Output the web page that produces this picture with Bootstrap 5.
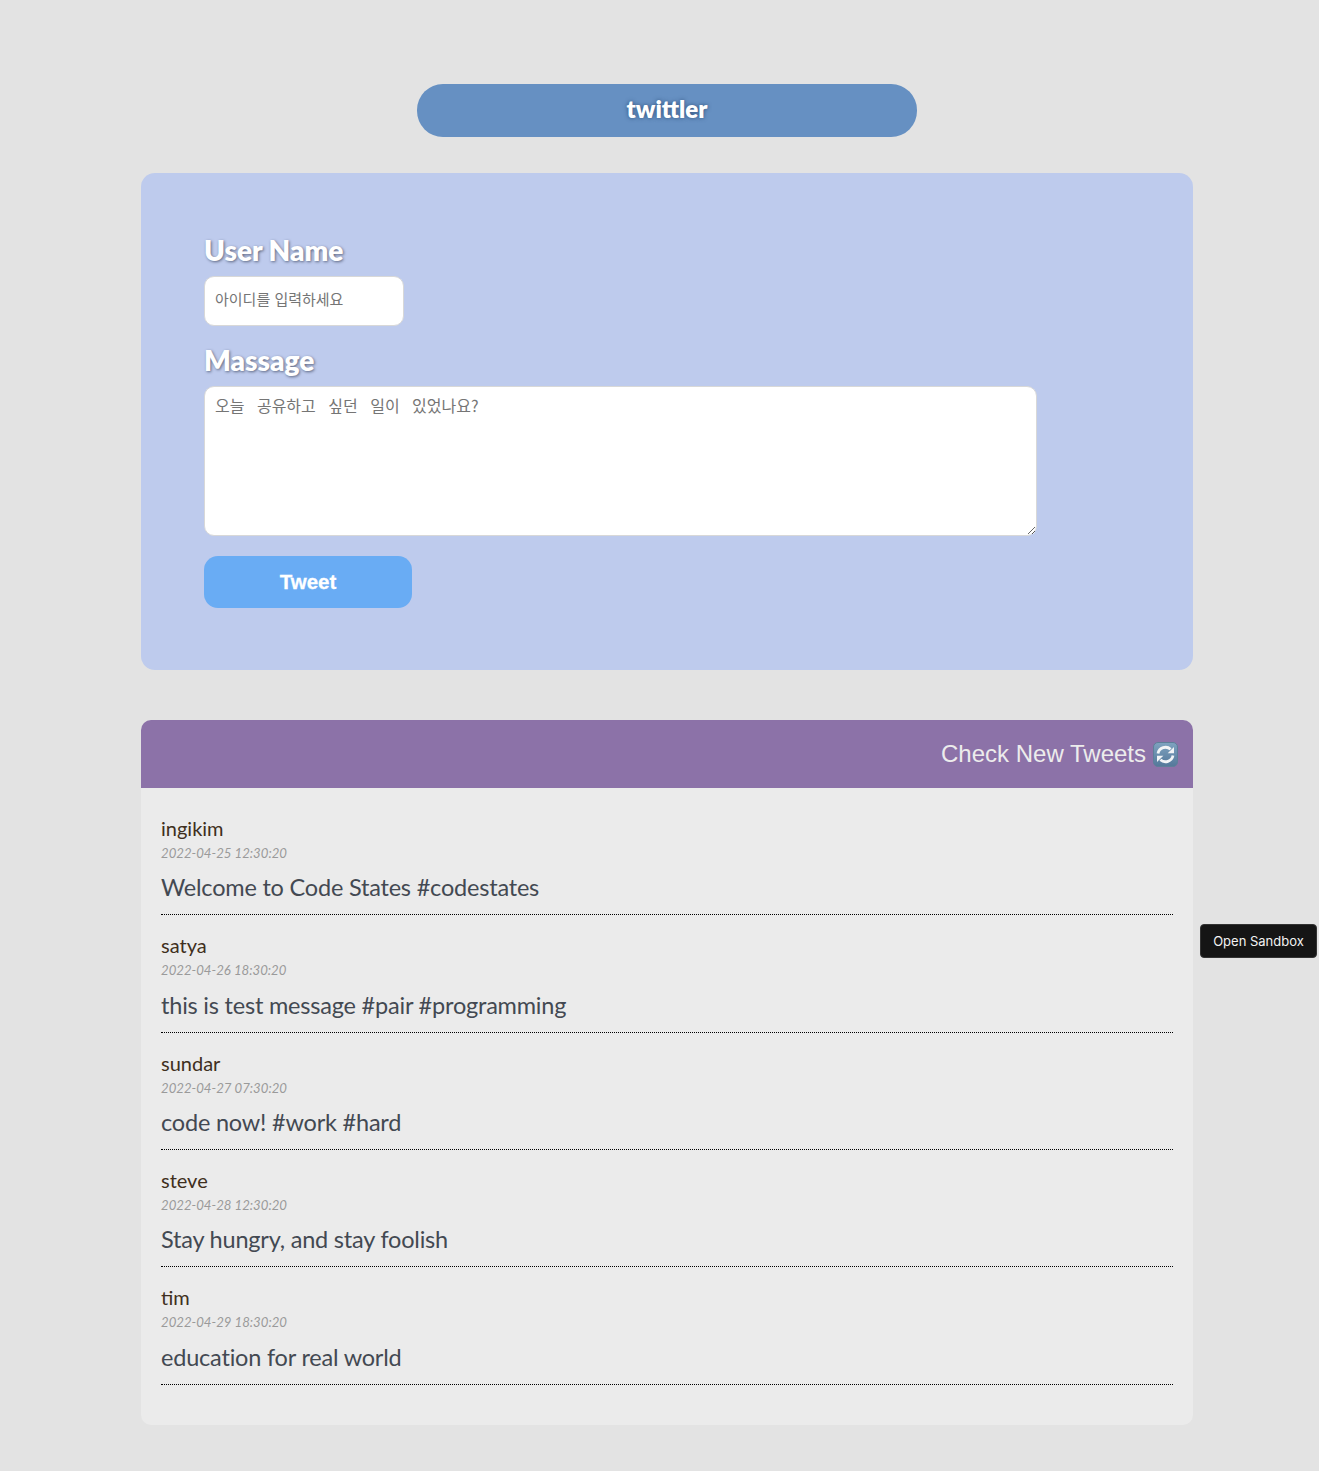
<!DOCTYPE html>
<html lang="ko">
<head>
<meta charset="utf-8">
<title>twittler</title>
<link rel="stylesheet" href="https://cdn.jsdelivr.net/npm/bootstrap@5.3.0/dist/css/bootstrap.min.css">
<style>
html,body{height:100%}
body{background:#e3e3e3;font-family:Lato,"Noto Sans CJK KR",sans-serif;margin:0}
.page-wrap{padding:84px 0 46px 15px}
.page-inner{width:1052px}
.title-bar{width:500px;height:53px;background:#6690c2;border-radius:26px;color:#fff;font-weight:800;font-size:24px;line-height:50px;text-align:center;text-shadow:0 0 4px #2f4f7a}
.form-panel{margin-top:36px;height:497px;background:#becbed;border-radius:14px;padding:59px 63px 0}
.field-title{display:block;color:#fff;font-weight:800;font-size:28px;line-height:36px;height:44px;margin:0;text-shadow:1px 1px 3px #5c6680}
.form-panel .name-box,.form-panel .msg-box{display:block;border:1px solid #d8d8d8;border-radius:10px;background:#fff;padding:8px 10px;font-family:"Noto Sans CJK KR","Noto Sans",sans-serif;line-height:20px;color:#333;box-shadow:none}
.name-box::placeholder,.msg-box::placeholder{color:#757575;opacity:1}
.form-panel .name-box{width:200px;height:50px;margin-bottom:16px;font-size:15px;padding-bottom:13px}
.form-panel .msg-box{width:833px;height:150px;font-size:16px;word-spacing:8px;resize:vertical;min-height:0}
.tweet-btn{display:block;width:208px;height:52px;margin-top:20px;border:0;border-radius:14px;background:#69acf4;color:#fff;font-family:"Liberation Sans",sans-serif;font-weight:700;font-size:20.5px;padding:0;-webkit-text-stroke:.3px #fff}
.tweet-btn:hover{background:#69acf4;color:#fff}
.feed-panel{margin-top:50px;background:#ebebeb;border-radius:10px;height:705px;overflow:hidden}
.feed-head{height:68px;background:#8c72a8;color:#ececec;font-family:"Liberation Sans",sans-serif;font-size:24px;line-height:68px;padding-right:15px}
.refresh-icon{width:25px;height:25px;margin-left:7px;vertical-align:-5px}
.feed-list{padding:9.8px 20px 0}
.feed-item{height:117.4px;padding-top:19px;border-bottom:1px dotted #000}
.who{color:#3f2f20;font-size:20px;line-height:22px}
.when{color:#9a9a9a;font-size:13.2px;font-style:italic;line-height:22px;margin-top:3px}
.what{color:#434952;font-size:23.5px;line-height:30px;margin-top:8.4px;letter-spacing:-.2px}
.sandbox-tag{position:fixed;left:1200px;top:924px;width:117px;height:34px;background:#151515;border:1px solid #333;border-radius:4px;color:#f2f2f2;font-family:Inter,sans-serif;font-size:13px;line-height:32px;text-align:center}
</style>
</head>
<body>
<div class="page-wrap">
  <div class="page-inner mx-auto">
    <div class="title-bar mx-auto">twittler</div>
    <form class="form-panel">
      <label class="field-title" for="u">User Name</label>
      <input id="u" class="name-box form-control" type="text" placeholder="아이디를 입력하세요">
      <label class="field-title" for="m">Massage</label>
      <textarea id="m" class="msg-box form-control" placeholder="오늘 공유하고 싶던 일이 있었나요?"></textarea>
      <button type="button" class="tweet-btn btn">Tweet</button>
    </form>
    <section class="feed-panel">
      <div class="feed-head text-end">Check New Tweets<svg class="refresh-icon" viewBox="0 0 25 25" aria-hidden="true"><defs><linearGradient id="g" x1="0" y1="0" x2="0" y2="1"><stop offset="0" stop-color="#7fa3c0"/><stop offset="1" stop-color="#54789a"/></linearGradient></defs><rect x=".5" y=".5" width="24" height="24" rx="4.5" fill="url(#g)" stroke="#5f7f99"/><path d="M5 11.5a7.6 7.6 0 0 1 12.6-4.2" fill="none" stroke="#f2f4f6" stroke-width="2.8"/><path d="M21 5v6.3h-6.3z" fill="#f2f4f6"/><path d="M20 13.5a7.6 7.6 0 0 1-12.6 4.2" fill="none" stroke="#f2f4f6" stroke-width="2.8"/><path d="M4 20v-6.3h6.3z" fill="#f2f4f6"/></svg></div>
      <div class="feed-list">
        <article class="feed-item"><div class="who">ingikim</div><div class="when">2022-04-25 12:30:20</div><div class="what">Welcome to Code States #codestates</div></article>
        <article class="feed-item"><div class="who">satya</div><div class="when">2022-04-26 18:30:20</div><div class="what">this is test message #pair #programming</div></article>
        <article class="feed-item"><div class="who">sundar</div><div class="when">2022-04-27 07:30:20</div><div class="what">code now! #work #hard</div></article>
        <article class="feed-item"><div class="who">steve</div><div class="when">2022-04-28 12:30:20</div><div class="what">Stay hungry, and stay foolish</div></article>
        <article class="feed-item"><div class="who">tim</div><div class="when">2022-04-29 18:30:20</div><div class="what">education for real world</div></article>
      </div>
    </section>
  </div>
</div>
<div class="sandbox-tag">Open Sandbox</div>
<script src="https://cdn.jsdelivr.net/npm/bootstrap@5.3.0/dist/js/bootstrap.bundle.min.js"></script>
</body>
</html>
